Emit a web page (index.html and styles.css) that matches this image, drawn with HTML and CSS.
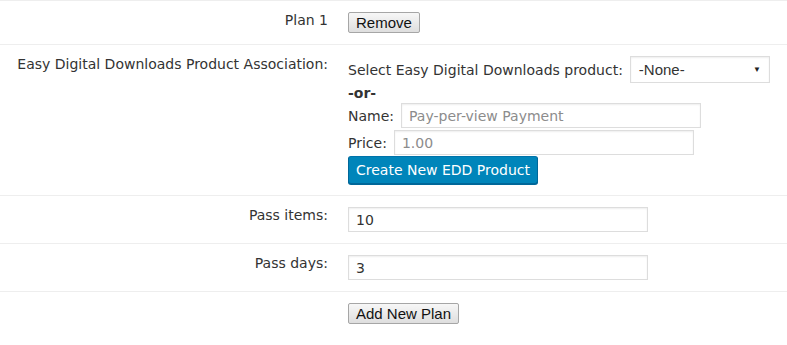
FILE: index.html
```html
<!DOCTYPE html>
<html lang="en">
<head>
    <meta charset="UTF-8">
    <title>Pay-per-view Plans</title>
    <link rel="stylesheet" href="styles.css">
</head>
<body>
    <div class="plans">
        <div class="row">
            <div class="label">Plan 1</div>
            <div class="field">
                <button type="button" class="plain-button">Remove</button>
            </div>
        </div>
        <div class="row">
            <div class="label">Easy Digital Downloads Product Association:</div>
            <div class="field">
                <div class="line">
                    <span>Select Easy Digital Downloads product:</span>
                    <div class="select">
                        <span>-None-</span>
                        <span class="arrow">&#9660;</span>
                    </div>
                </div>
                <div class="or">-or-</div>
                <div class="line">
                    <span>Name:</span>
                    <input type="text" class="text-input" placeholder="Pay-per-view Payment">
                </div>
                <div class="line price-line">
                    <span>Price:</span>
                    <input type="text" class="text-input" placeholder="1.00">
                </div>
                <button type="button" class="primary-button">Create New EDD Product</button>
            </div>
        </div>
        <div class="row">
            <div class="label">Pass items:</div>
            <div class="field">
                <input type="text" class="text-input" value="10">
            </div>
        </div>
        <div class="row">
            <div class="label">Pass days:</div>
            <div class="field">
                <input type="text" class="text-input" value="3">
            </div>
        </div>
        <div class="row last-row">
            <div class="label"></div>
            <div class="field">
                <button type="button" class="plain-button">Add New Plan</button>
            </div>
        </div>
    </div>
</body>
</html>
```

FILE: styles.css
```css
body {
    margin: 0;
    background-color: #ffffff;
    color: #333333;
    font-family: "DejaVu Sans", Verdana, sans-serif;
    font-size: 14px;
}
.plans {
    border-top: 1px solid #eeeeee;
}
.row {
    display: grid;
    grid-template-columns: 328px 1fr;
    column-gap: 20px;
    border-bottom: 1px solid #eeeeee;
    padding: 11px 0;
}
.last-row {
    border-bottom: none;
}
.label {
    text-align: right;
    line-height: 18px;
    margin-top: -1px;
}
.field {
    display: flex;
    flex-direction: column;
    align-items: flex-start;
}
.line {
    display: flex;
    align-items: center;
    gap: 7px;
}
.price-line {
    margin: 2px 0 1px;
}
.select {
    width: 140px;
    height: 27px;
    box-sizing: border-box;
    border: 1px solid #dddddd;
    box-shadow: inset 0 1px 2px rgba(0, 0, 0, 0.07);
    padding: 0 8px;
    display: flex;
    align-items: center;
    justify-content: space-between;
    font-family: "Liberation Sans", Arial, sans-serif;
    font-size: 15px;
    color: #333333;
}
.arrow {
    font-size: 8px;
    color: #222222;
}
.or {
    font-weight: bold;
    line-height: 18px;
    margin: 1px 0;
}
.text-input {
    width: 300px;
    height: 25px;
    box-sizing: border-box;
    border: 1px solid #dddddd;
    box-shadow: inset 0 1px 2px rgba(0, 0, 0, 0.07);
    padding: 0 7px;
    margin: 0;
    font-family: "DejaVu Sans", Verdana, sans-serif;
    font-size: 14px;
    color: #333333;
}
.text-input::placeholder {
    color: #8c8c8c;
}
.plain-button {
    font-family: "Liberation Sans", Arial, sans-serif;
    font-size: 15px;
    color: #111111;
    height: 21px;
    padding: 0 7px;
    border: 1px solid #a6a6a6;
    border-radius: 2px;
    background: linear-gradient(#f7f7f7, #dedede);
}
.primary-button {
    height: 28px;
    padding: 0 7px;
    font-family: "DejaVu Sans", Verdana, sans-serif;
    font-size: 14px;
    color: #ffffff;
    background-color: #0085ba;
    border: 1px solid #0073aa;
    border-color: #0073aa #006799 #006799;
    border-radius: 3px;
    box-shadow: 0 1px 0 #006799;
}
```
